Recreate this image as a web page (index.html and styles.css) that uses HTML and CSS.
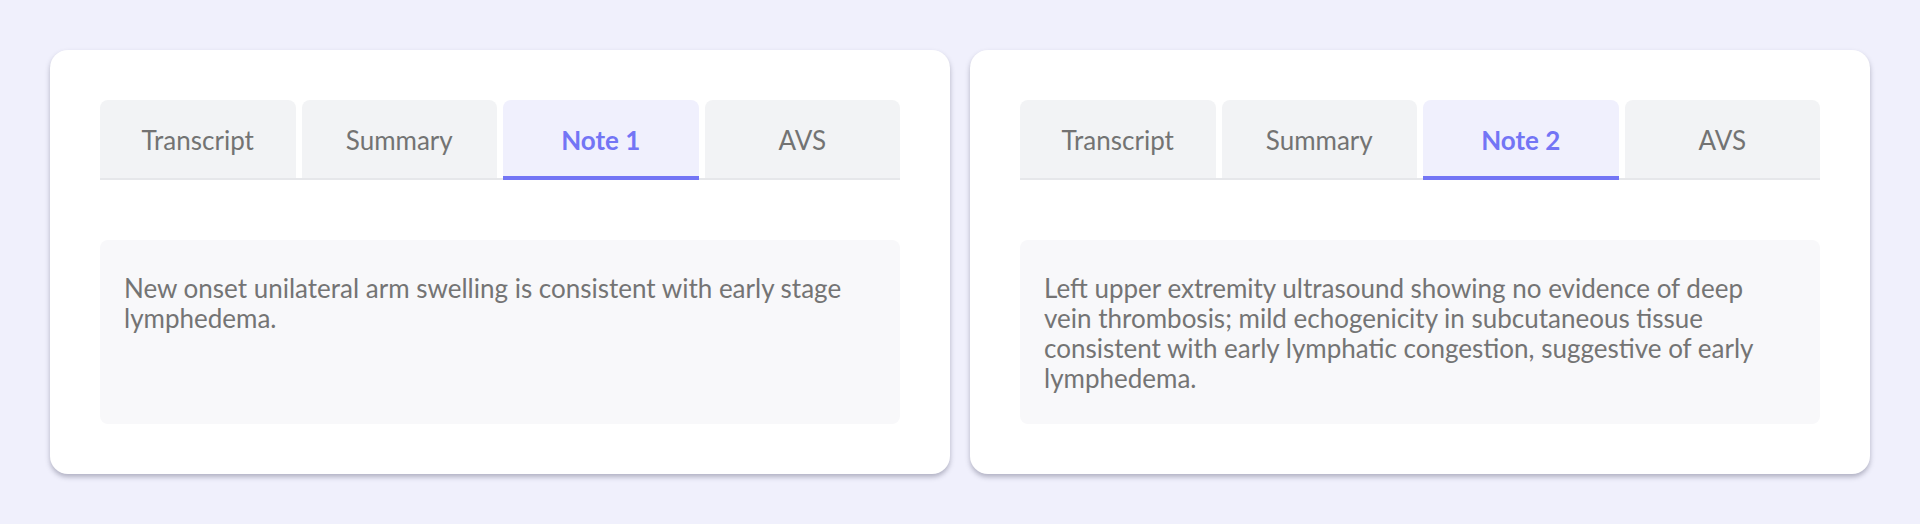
FILE: index.html
```html
<!DOCTYPE html>
<html lang="en">
<head>
    <meta charset="UTF-8">
    <meta name="viewport" content="width=device-width, initial-scale=1.0">
    <title>Notes</title>
    <link rel="stylesheet" href="styles.css">
</head>
<body>
    <div class="page">
        <div class="card">
            <div class="tabs">
                <div class="tab">Transcript</div>
                <div class="tab">Summary</div>
                <div class="tab active">Note 1</div>
                <div class="tab">AVS</div>
            </div>
            <div class="note-body">
                New onset unilateral arm swelling is consistent with early stage lymphedema.
            </div>
        </div>

        <div class="card">
            <div class="tabs">
                <div class="tab">Transcript</div>
                <div class="tab">Summary</div>
                <div class="tab active">Note 2</div>
                <div class="tab">AVS</div>
            </div>
            <div class="note-body">
                Left upper extremity ultrasound showing no evidence of deep vein thrombosis; mild echogenicity in subcutaneous tissue consistent with early lymphatic congestion, suggestive of early lymphedema.
            </div>
        </div>
    </div>
</body>
</html>
```

FILE: styles.css
```css
* {
    box-sizing: border-box;
}

body {
    font-family: Lato, 'Open Sans', sans-serif;
    margin: 0;
    padding: 0;
    background: #f0f0fc;
    color: #6b6b6b;
}

.page {
    display: flex;
    gap: 20px;
    padding: 50px;
}

.card {
    flex: 1;
    background: #fff;
    border-radius: 18px;
    padding: 50px;
    box-shadow: 0 3px 5px rgba(60, 60, 90, 0.35);
}

.tabs {
    display: grid;
    grid-template-columns: repeat(4, 1fr);
    gap: 6px;
    align-items: start;
    border-bottom: 2px solid #e6e7ea;
}

.tab {
    height: 78px;
    padding-top: 2px;
    display: flex;
    align-items: center;
    justify-content: center;
    background: #f2f3f5;
    border-radius: 8px 8px 0 0;
    font-size: 26px;
    color: #737373;
}

.tab.active {
    height: 80px;
    margin-bottom: -2px;
    padding-top: 4px;
    background: #f0f0fd;
    color: #7375f5;
    font-weight: 700;
    border-bottom: 4px solid #7375f5;
}

.note-body {
    margin-top: 60px;
    min-height: 184px;
    padding: 33px 24px 27px;
    background: #f8f8fa;
    border-radius: 8px;
    font-size: 26px;
    line-height: 30px;
    color: #747474;
}
```
